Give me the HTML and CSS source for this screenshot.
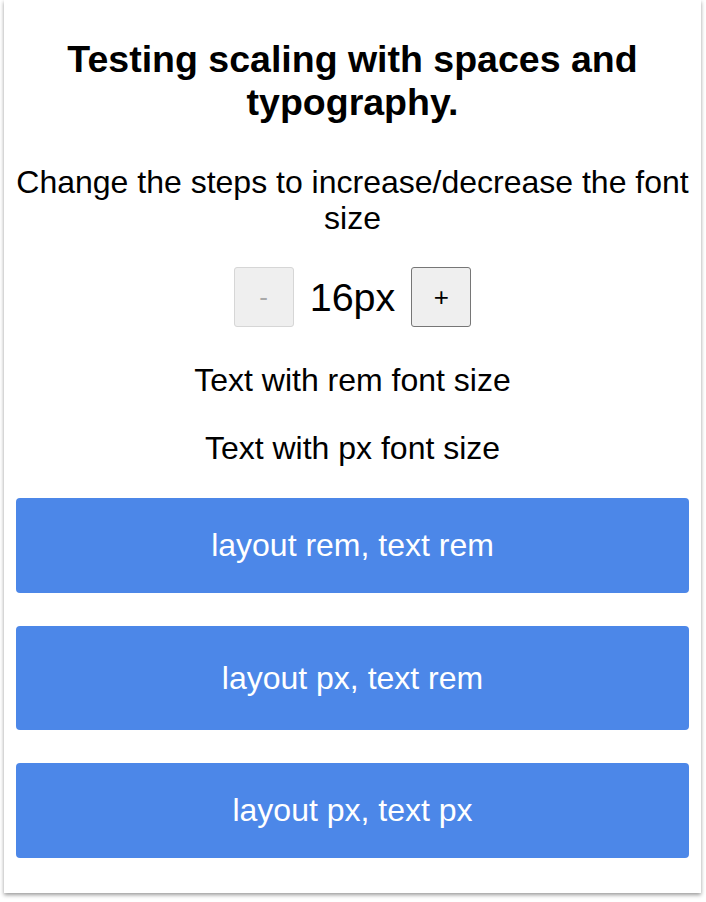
FILE: index.html
```html
<!DOCTYPE html>
<html lang="en">
<head>
  <meta charset="UTF-8">
  <title>Scaling test</title>
  <link rel="stylesheet" href="styles.css">
</head>
<body>
  <div class="card">
    <h1 class="titulo">Testing scaling with spaces and typography.</h1>
    <p class="intro">Change the steps to increase/decrease the font size</p>

    <div class="contador">
      <button class="paso" disabled>-</button>
      <span class="valor">16px</span>
      <button class="paso">+</button>
    </div>

    <p class="muestra muestra-rem">Text with rem font size</p>
    <p class="muestra muestra-px">Text with px font size</p>

    <div class="bloque bloque-rem">layout rem, text rem</div>
    <div class="bloque bloque-mixto">layout px, text rem</div>
    <div class="bloque bloque-px">layout px, text px</div>
  </div>
</body>
</html>
```

FILE: styles.css
```css
body {
  margin: 0;
  padding-bottom: 9px;
  background: #fff;
  font-family: "Liberation Sans", Arial, sans-serif;
  color: #000;
}

.card {
  box-sizing: border-box;
  width: 697px;
  height: 893px;
  margin: 0 4px;
  padding: 38px 12px 0 12px;
  background: #fff;
  box-shadow: 0 2px 4px rgba(0, 0, 0, 0.4);
  display: flex;
  flex-direction: column;
  text-align: center;
}

.titulo {
  margin: 0;
  font-size: 37.5px;
  line-height: 43px;
  font-weight: bold;
  padding: 0 40px;
}

.intro {
  margin: 40px 0 0 0;
  font-size: 32px;
  line-height: 36px;
}

.contador {
  margin-top: 31px;
  display: flex;
  justify-content: center;
  align-items: center;
  gap: 16px;
}

.paso {
  width: 60px;
  height: 60px;
  box-sizing: border-box;
  border: 1px solid #767676;
  border-radius: 3px;
  background: #efefef;
  font-family: "Liberation Sans", Arial, sans-serif;
  font-size: 26px;
  color: #000;
  padding: 0;
}

.paso:disabled {
  border-color: #d6d6d6;
  color: #a9a9a9;
  background: #efefef;
}

.valor {
  font-size: 39.5px;
  line-height: 44px;
}

.muestra {
  margin: 0;
  font-size: 32px;
  line-height: 37px;
}

.muestra-rem {
  margin-top: 35px;
}

.muestra-px {
  margin-top: 31px;
}

.bloque {
  background: #4c87e8;
  color: #fff;
  border-radius: 4px;
  font-size: 32px;
  display: flex;
  align-items: center;
  justify-content: center;
}

.bloque-rem {
  margin-top: 31px;
  height: 95px;
}

.bloque-mixto {
  margin-top: 33px;
  height: 104px;
}

.bloque-px {
  margin-top: 33px;
  height: 95px;
}
```
